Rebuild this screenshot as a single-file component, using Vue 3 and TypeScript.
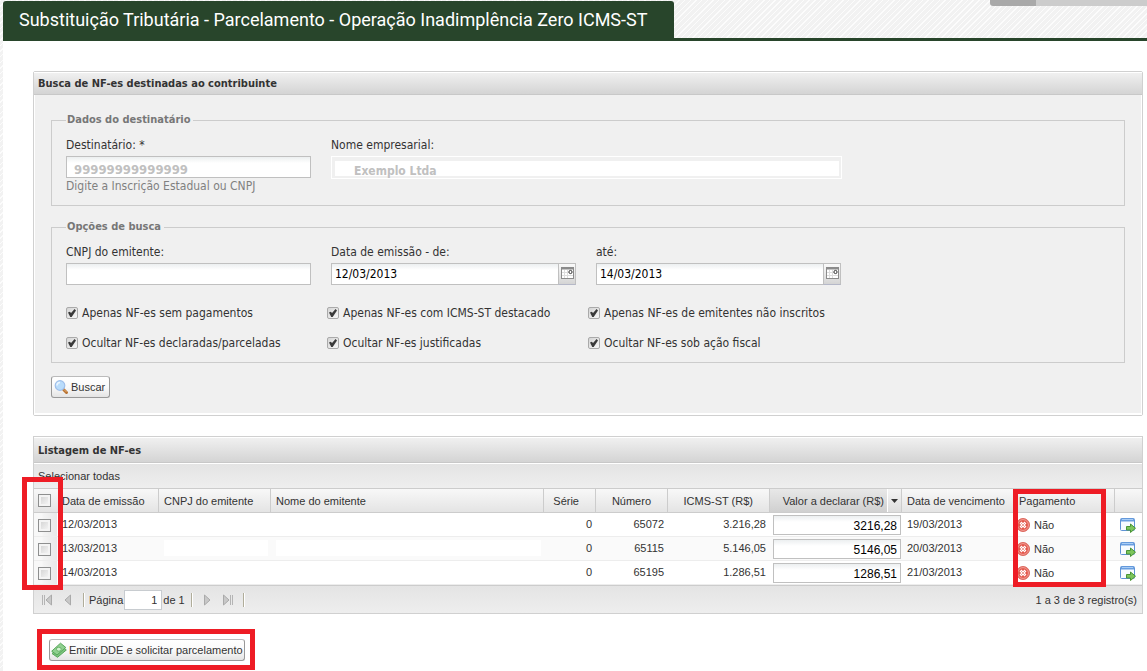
<script setup lang="ts">
import { reactive, ref } from 'vue'

interface Nota {
  emissao: string
  serie: string
  numero: string
  icms: string
  valor: string
  vencimento: string
  marcada: boolean
  oculta: boolean
}

interface Opcao {
  id: string
  rotulo: string
  ativa: boolean
}

const destinatario = ref('99999999999999')
const empresa = ref('Exemplo Ltda')
const cnpjEmitente = ref('')
const dataDe = ref('12/03/2013')
const dataAte = ref('14/03/2013')
const pagina = ref('1')
const todas = ref(false)

const opcoes = reactive<Opcao[]>([
  { id: 'sem-pagamento', rotulo: 'Apenas NF-es sem pagamentos', ativa: true },
  { id: 'destacado', rotulo: 'Apenas NF-es com ICMS-ST destacado', ativa: true },
  { id: 'nao-inscritos', rotulo: 'Apenas NF-es de emitentes não inscritos', ativa: true },
  { id: 'declaradas', rotulo: 'Ocultar NF-es declaradas/parceladas', ativa: true },
  { id: 'justificadas', rotulo: 'Ocultar NF-es justificadas', ativa: true },
  { id: 'acao-fiscal', rotulo: 'Ocultar NF-es sob ação fiscal', ativa: true },
])

const notas = reactive<Nota[]>([
  { emissao: '12/03/2013', serie: '0', numero: '65072', icms: '3.216,28', valor: '3216,28', vencimento: '19/03/2013', marcada: false, oculta: false },
  { emissao: '13/03/2013', serie: '0', numero: '65115', icms: '5.146,05', valor: '5146,05', vencimento: '20/03/2013', marcada: false, oculta: true },
  { emissao: '14/03/2013', serie: '0', numero: '65195', icms: '1.286,51', valor: '1286,51', vencimento: '21/03/2013', marcada: false, oculta: false },
])

function marcarTodas(valor: boolean): void {
  todas.value = valor
  notas.forEach((n) => (n.marcada = valor))
}
</script>

<template>
  <div class="page">
    <header class="top">
      <h1 class="tab">Substituição Tributária - Parcelamento - Operação Inadimplência Zero ICMS-ST</h1>
      <div class="top-menu"></div>
    </header>

    <main class="content">
      <section class="panel search">
        <h2 class="panel-title">Busca de NF-es destinadas ao contribuinte</h2>
        <form class="panel-body" @submit.prevent>
          <fieldset class="group">
            <legend>Dados do destinatário</legend>
            <div class="fields">
              <div class="field">
                <label for="dest">Destinatário: *</label>
                <input id="dest" v-model="destinatario" class="text masked" type="text" />
                <span class="hint">Digite a Inscrição Estadual ou CNPJ</span>
              </div>
              <div class="field wide">
                <label for="nome">Nome empresarial:</label>
                <input id="nome" v-model="empresa" class="readonly" type="text" readonly />
              </div>
            </div>
          </fieldset>

          <fieldset class="group options">
            <legend>Opções de busca</legend>
            <div class="fields">
              <div class="field">
                <label for="cnpj">CNPJ do emitente:</label>
                <input id="cnpj" v-model="cnpjEmitente" class="text" type="text" />
              </div>
              <div class="field">
                <label for="de">Data de emissão - de:</label>
                <div class="date">
                  <input id="de" v-model="dataDe" class="text" type="text" />
                  <button type="button" class="trigger" aria-label="Abrir calendário">
                    <svg width="13" height="13" viewBox="0 0 13 13"><rect x=".5" y=".5" width="12" height="11" fill="#fff" stroke="#8b8b8b" /><path d="M1 1.5h11" stroke="#8b8b8b" stroke-width="2" /><path d="M3.5 3v8M6.5 3v8M1 5.5h8M1 8.5h11" stroke="#ddd" /><circle cx="9.500" cy="5" r="1.600" fill="#fff" stroke="#333" /></svg>
                  </button>
                </div>
              </div>
              <div class="field">
                <label for="ate">até:</label>
                <div class="date">
                  <input id="ate" v-model="dataAte" class="text" type="text" />
                  <button type="button" class="trigger" aria-label="Abrir calendário">
                    <svg width="13" height="13" viewBox="0 0 13 13"><rect x=".5" y=".5" width="12" height="11" fill="#fff" stroke="#8b8b8b" /><path d="M1 1.5h11" stroke="#8b8b8b" stroke-width="2" /><path d="M3.5 3v8M6.5 3v8M1 5.5h8M1 8.5h11" stroke="#ddd" /><circle cx="9.500" cy="5" r="1.600" fill="#fff" stroke="#333" /></svg>
                  </button>
                </div>
              </div>
            </div>
            <div class="checks">
              <div v-for="o in opcoes" :key="o.id" class="check">
                <input :id="o.id" v-model="o.ativa" class="tick" type="checkbox" />
                <label :for="o.id">{{ o.rotulo }}</label>
              </div>
            </div>
          </fieldset>

          <button type="submit" class="btn">
            <svg width="16" height="16" viewBox="0 0 16 16"><path d="M10.500 10.500l3 3" stroke="#b87333" stroke-width="3" stroke-linecap="round" /><path d="M11 10.500l2.600 2.600" stroke="#e8b070" stroke-width="1" /><circle cx="7" cy="6.500" r="4.800" fill="#b9dcfb" stroke="#9fbfea" stroke-width="1.200" /><path d="M4 6.500a3 3 0 0 1 3-3" fill="none" stroke="#e9f5ff" stroke-width="1.600" /></svg>
            <span>Buscar</span>
          </button>
        </form>
      </section>

      <section class="panel list">
        <h2 class="panel-title">Listagem de NF-es</h2>
        <div class="toolbar">
          <button type="button" class="plain" @click="marcarTodas(true)">Selecionar todas</button>
        </div>
        <table class="grid">
          <colgroup>
            <col class="c-check" /><col class="c-emissao" /><col class="c-cnpj" /><col /><col class="c-serie" /><col class="c-numero" /><col class="c-icms" /><col class="c-valor" /><col class="c-venc" /><col class="c-pag" /><col class="c-acao" />
          </colgroup>
          <thead>
            <tr>
              <th class="sel"><input class="box" type="checkbox" aria-label="Marcar todas" :checked="todas" @change="marcarTodas(!todas)" /></th>
              <th>Data de emissão</th>
              <th>CNPJ do emitente</th>
              <th>Nome do emitente</th>
              <th class="num">Série</th>
              <th class="num">Número</th>
              <th class="num">ICMS-ST (R$)</th>
              <th class="num sorted">
                <div class="sort">
                  <span>Valor a declarar (R$)</span>
                  <button type="button" class="arrow" aria-label="Opções da coluna"><svg width="7" height="4" viewBox="0 0 7 4"><path d="M0 0h7L3.500 4z" fill="#333" /></svg></button>
                </div>
              </th>
              <th>Data de vencimento</th>
              <th>Pagamento</th>
              <th></th>
            </tr>
          </thead>
          <tbody>
            <tr v-for="n in notas" :key="n.numero">
              <td class="sel"><input v-model="n.marcada" class="box" type="checkbox" :aria-label="'Marcar NF-e ' + n.numero" /></td>
              <td>{{ n.emissao }}</td>
              <td><span v-if="n.oculta" class="blank"></span></td>
              <td><span v-if="n.oculta" class="blank"></span></td>
              <td class="num">{{ n.serie }}</td>
              <td class="num">{{ n.numero }}</td>
              <td class="num">{{ n.icms }}</td>
              <td class="edit"><input v-model="n.valor" class="amount" type="text" :aria-label="'Valor a declarar da NF-e ' + n.numero" /></td>
              <td>{{ n.vencimento }}</td>
              <td class="pay">
                <div class="pay-in">
                  <svg width="14" height="14" viewBox="0 0 14 14"><circle cx="7" cy="7" r="6.500" fill="#e4574b" stroke="#dc6a60" /><circle cx="7" cy="7" r="5.400" fill="none" stroke="#f0a099" /><path d="M4.500 4.500l5 5M9.500 4.500l-5 5" stroke="#fff" stroke-width="2.600" /><path d="M4.500 4.500l5 5M9.500 4.500l-5 5" stroke="#eea39c" stroke-width="1" /></svg>
                  <span>Não</span>
                </div>
              </td>
              <td class="act">
                <button type="button" class="go" :aria-label="'Detalhar NF-e ' + n.numero">
                  <svg width="16" height="16" viewBox="0 0 16 16"><rect x=".5" y="1.500" width="14" height="12" rx="1" fill="#f7fbff" stroke="#5f93d6" /><path d="M1 3h13" stroke="#6a9fe0" stroke-width="3" /><path d="M2 2.500h11" stroke="#a9cdf5" /><path d="M6.500 9.500h4V7l5 4.200-5 4.300V13h-4z" fill="#7cc55c" stroke="#4a9436" /></svg>
                </button>
              </td>
            </tr>
          </tbody>
        </table>
        <div class="paging">
          <button type="button" class="nav" aria-label="Primeira página"><svg width="12" height="12" viewBox="0 0 12 12"><path d="M1.500 1v10M3.500 1v10" stroke="#b4b4b4" /><path d="M10.500 1v10L5 6z" fill="#c8c8c8" stroke="#aaa" /></svg></button>
          <button type="button" class="nav" aria-label="Página anterior"><svg width="12" height="12" viewBox="0 0 12 12"><path d="M8.500 1v10L3 6z" fill="#c8c8c8" stroke="#aaa" /></svg></button>
          <i class="sep"></i>
          <label for="pag">Página</label>
          <input id="pag" v-model="pagina" class="page-no" type="text" />
          <span class="of">de 1</span>
          <i class="sep"></i>
          <button type="button" class="nav" aria-label="Próxima página"><svg width="12" height="12" viewBox="0 0 12 12"><path d="M3.500 1v10L9 6z" fill="#c8c8c8" stroke="#aaa" /></svg></button>
          <button type="button" class="nav" aria-label="Última página"><svg width="12" height="12" viewBox="0 0 12 12"><path d="M8.500 1v10M10.500 1v10" stroke="#b4b4b4" /><path d="M1.500 1v10L7 6z" fill="#c8c8c8" stroke="#aaa" /></svg></button>
          <i class="sep"></i>
          <span class="total">1 a 3 de 3 registro(s)</span>
        </div>
        <div class="mark mark-check"></div>
        <div class="mark mark-pay"></div>
      </section>

      <div class="issue">
        <button type="button" class="btn">
          <svg width="16" height="16" viewBox="0 0 16 16"><path d="M1 11.500L10.500 4l4.800 4L6.500 15.300z" fill="#7cc47c" stroke="#57a65b" /><path d="M.7 9.200L9.500 1.200l5.300 4.300L6 13z" fill="#8fd08f" stroke="#57a65b" /><ellipse cx="7.800" cy="7.200" rx="2.400" ry="2" fill="#d2f2d0" stroke="#5aa85d" stroke-width=".8" /></svg>
          <span>Emitir DDE e solicitar parcelamento</span>
        </button>
      </div>
    </main>
  </div>
</template>

<style>
body {
  margin: 0;
}
</style>

<style scoped>
.page {
  --stripes: repeating-linear-gradient(135deg, #fcfcfc 0 1px, #f2f2f2 1px 4px);
  box-sizing: border-box;
  min-height: 100vh;
  padding-left: 3px;
  background: var(--stripes);
  font-family: "Liberation Sans", Arial, sans-serif;
  font-size: 11px;
  color: #333;
}
.page * {
  box-sizing: border-box;
}
.page button,
.page input {
  margin: 0;
  font-family: inherit;
  font-size: inherit;
  color: inherit;
}
.top {
  display: flex;
  justify-content: space-between;
  align-items: flex-start;
  padding-top: 1px;
  border-bottom: 3px solid #28452b;
}
.tab {
  margin: 0;
  padding: 1px 27px 0 16px;
  border-radius: 3px 3px 0 0;
  background: #28452b;
  color: #fff;
  font: 400 18px/36px Roboto, sans-serif;
  white-space: nowrap;
}
.top-menu {
  width: 157px;
  height: 6px;
  margin-top: -1px;
  border-radius: 0 0 0 3px;
  background: linear-gradient(90deg, #a9a9a9 46px, #ccc 46px);
}
.content {
  min-height: calc(100vh - 41px);
  padding: 30px 4px 1px 30px;
  background: #fff;
}
.panel {
  position: relative;
  border: 1px solid #d0d0d0;
}
.panel-title {
  margin: 0;
  padding: 1px 4px 0;
  border-top: 1px solid #fff;
  border-bottom: 1px solid #c8c8c8;
  background: linear-gradient(#f0f0f0, #d4d4d4);
  font: bold 11px/21px "DejaVu Sans Condensed", Tahoma, sans-serif;
}
.search {
  border-radius: 2px;
}
.search .panel-title {
  line-height: 20px;
}
.panel-body {
  padding: 18px 16px 15px;
  border: solid #fff;
  border-width: 0 1px 2px;
  background: #f0f0f0;
  font: 12px/16px "DejaVu Sans Condensed", Tahoma, sans-serif;
}
.group {
  margin: 0;
  padding: 10px 14px 11px;
  border: 1px solid #ccc;
  min-width: 0;
}
.group legend {
  padding: 0 3px 0 1px;
  color: #777;
  font-weight: bold;
  font-size: 11px;
  line-height: 14px;
}
.options {
  margin-top: 14px;
  padding-bottom: 4px;
}
.fields {
  display: flex;
  gap: 20px;
}
.field {
  display: flex;
  flex-direction: column;
  width: 245px;
}
.field.wide {
  width: 511px;
}
.field label {
  margin-bottom: 3px;
}
.field .text {
  width: 100%;
  height: 22px;
  padding: 0 3px;
  border: 1px solid #c0c0c0;
  background: linear-gradient(#eceff0, #fff 6px);
  color: #000;
}
.page .field .masked,
.page .field .readonly {
  color: #c0c0c0;
  font-weight: bold;
  font-size: 13px;
}
.field .masked {
  padding: 5px 7px 0;
}
.page .field .readonly {
  height: 23px;
  padding: 7px 4px 0 22px;
  border: 1px solid #fff;
  background: linear-gradient(#fff, #fff) 3px 4px / calc(100% - 5px) 15px no-repeat #f0f0f0;
  font-size: 12px;
}
.hint {
  color: #808080;
}
.date {
  display: flex;
}
.date .text {
  flex: 1;
  min-width: 0;
  border-right: 0;
}
.trigger {
  width: 18px;
  height: 22px;
  padding: 0 0 2px 2px;
  border: 1px solid #c0c0c0;
  border-bottom-color: #b5b8c8;
  background: linear-gradient(#fafafa, #d4d4d4);
  line-height: 0;
}
.trigger svg {
  display: block;
}
.checks {
  display: grid;
  grid-template-columns: repeat(3, 261px);
  margin-top: 13px;
}
.check {
  display: flex;
  align-items: center;
  height: 30px;
  gap: 4px;
}
.tick {
  appearance: none;
  width: 12px;
  height: 12px;
  border: 1px solid #aaa;
  border-radius: 2px;
  background: linear-gradient(135deg, #d4d4d4, #f8f8f8);
}
.tick:checked::after {
  content: "";
  display: block;
  width: 8px;
  height: 8px;
  margin: 1px;
  background: #3a3a3a;
  clip-path: polygon(0 45%, 22% 35%, 38% 50%, 82% 0, 100% 18%, 46% 100%, 28% 100%);
}
.btn {
  display: inline-flex;
  align-items: center;
  gap: 2px;
  height: 22px;
  padding: 0 4px 0 1px;
  border: 1px solid #999;
  border-top-color: #bbb;
  border-radius: 3px;
  background: linear-gradient(#fff, #fafafa 50%, #e4e4e4);
  white-space: nowrap;
}
.panel-body .btn {
  display: flex;
  margin-top: 13px;
  font: 11px "Liberation Sans", Arial, sans-serif;
}
.list {
  margin-top: 20px;
}
.list .panel-title {
  padding-top: 2px;
  line-height: 22px;
}
.toolbar {
  display: flex;
  height: 25px;
  align-items: center;
  border-top: 1px solid #fff;
  background: linear-gradient(#e4e4e4, #eee);
}
.plain {
  padding: 0 4px;
  border: 0;
  background: none;
}
.grid {
  width: 100%;
  border-spacing: 0;
  table-layout: fixed;
}
.c-check { width: 23px; }
.c-emissao { width: 102px; }
.c-cnpj { width: 112px; }
.c-serie { width: 52px; }
.c-numero { width: 72px; }
.c-icms { width: 102px; }
.c-valor { width: 132px; }
.c-venc { width: 112px; }
.c-pag { width: 101px; }
.c-acao { width: 27px; }
.grid th {
  height: 25px;
  padding: 0 4px 0 5px;
  border: solid #ccc;
  border-width: 1px 1px 1px 0;
  background: linear-gradient(#f8f8f8, #e4e4e4);
  font-weight: normal;
  text-align: left;
  white-space: nowrap;
}
.grid th:last-child {
  border-right: 0;
}
.grid th.num {
  padding-right: 16px;
}
.grid th.sorted {
  padding: 0;
  background: linear-gradient(#e8e8e8, #d0d0d0);
}
.grid th.sel,
.grid td.sel {
  padding: 0 0 0 4px;
  border-right: 0;
}
.grid .num {
  text-align: right;
}
.sort {
  display: flex;
  height: 23px;
  align-items: center;
  justify-content: flex-end;
  gap: 3px;
}
.arrow {
  display: flex;
  align-items: center;
  justify-content: center;
  width: 14px;
  height: 100%;
  padding: 0;
  border: 0;
  border-left: 1px solid #fff;
  background: linear-gradient(#f4f4f4, #ddd);
}
.grid td {
  height: 24px;
  padding: 0 4px 1px 5px;
  border-bottom: 1px solid #ededed;
}
.grid tbody tr:nth-child(even) td {
  background: #fafafa;
}
.grid tbody tr td.sel {
  padding-top: 1px;
  padding-bottom: 0;
  background: linear-gradient(90deg, #f8f8f8 8px, #f4f4f4 9px, #e8e8e8);
}
.box {
  appearance: none;
  display: block;
  width: 13px;
  height: 13px;
  border: 1px solid #8e8f8f;
  background: linear-gradient(135deg, #cfcfcf, #fafafa);
  box-shadow: inset 0 0 0 2px #f4f4f4;
}
.box:checked {
  background: #555;
}
.blank {
  display: block;
  height: 16px;
  margin: 0 -1px 0 0;
  background: #fff;
}
.grid td.edit {
  padding: 1px 1px 0 3px;
}
.page .amount {
  display: block;
  width: 100%;
  height: 20px;
  padding: 2px 3px 0;
  border: 1px solid #c0c0c0;
  background: linear-gradient(#eceff0, #fff 6px);
  font-size: 12px;
  color: #000;
  text-align: right;
}
.grid td.pay {
  padding: 1px 0 0 2px;
}
.pay-in {
  display: flex;
  align-items: center;
  gap: 4px;
}
.grid td.act {
  padding: 0 0 0 5px;
}
.go,
.nav {
  display: block;
  padding: 0;
  border: 0;
  background: none;
  line-height: 0;
}
.paging {
  display: flex;
  align-items: center;
  height: 28px;
  padding: 1px 5px 0 7px;
  border-top: 1px solid #ccc;
  background: linear-gradient(#e4e4e4, #eee);
}
.nav + .nav {
  margin-left: 9px;
}
.sep {
  width: 2px;
  height: 14px;
  margin: 0 8px 0 6px;
  border-left: 1px solid #b0ad9a;
  border-right: 1px solid #fff;
}
.nav + .sep {
  margin: 0 4px 0 9px;
}
.page .page-no {
  width: 38px;
  height: 20px;
  margin: 0 1px;
  padding: 0 4px;
  border: 1px solid #c8ccd0;
  background: #fff;
  text-align: right;
}
.total {
  margin-left: auto;
}
.mark {
  position: absolute;
  border: 5px solid #ee1c25;
  pointer-events: none;
}
.mark-check {
  top: 40px;
  left: -12px;
  width: 41px;
  height: 113px;
}
.mark-pay {
  top: 52px;
  right: 36px;
  width: 93px;
  height: 98px;
}
.issue {
  width: fit-content;
  margin: 15px 0 0 4px;
  padding: 5px 5px 4px 7px;
  border: 5px solid #ee1c25;
  line-height: 0;
}
.issue .btn {
  padding-right: 1px;
  line-height: 14px;
}
</style>
